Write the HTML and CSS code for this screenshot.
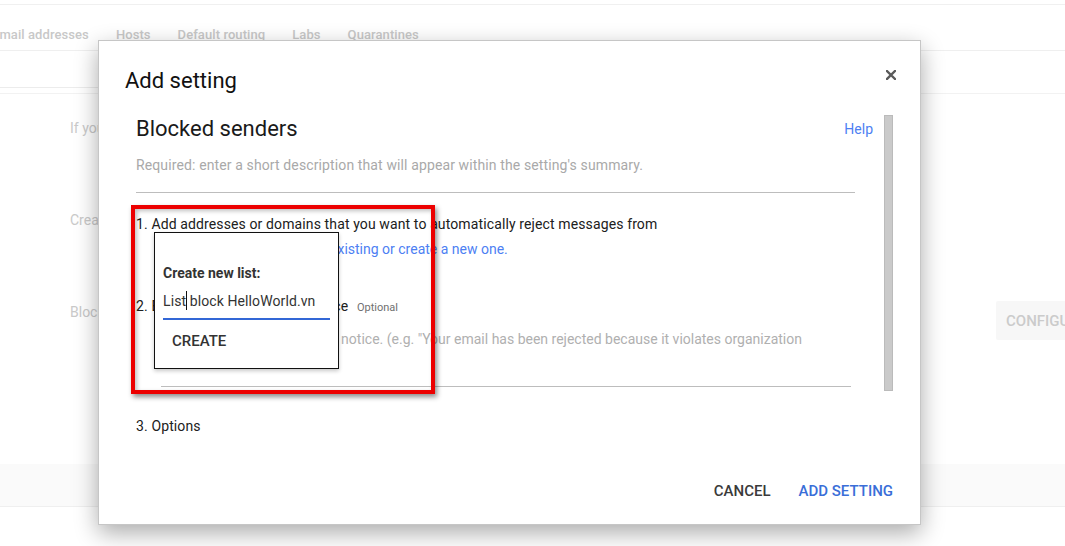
FILE: index.html
```html
<!DOCTYPE html>
<html lang="en">
<head>
<meta charset="utf-8">
<title>Add setting</title>
<link rel="stylesheet" href="styles.css">
</head>
<body>
<div class="page">
  <div class="topline"></div>
  <nav class="tabs">
    <span class="tab tab-first">Email addresses</span>
    <span class="tab">Hosts</span>
    <span class="tab">Default routing</span>
    <span class="tab">Labs</span>
    <span class="tab">Quarantines</span>
  </nav>
  <div class="subbar"></div>
  <div class="subrule-half"></div>
  <div class="subgap"></div>
  <div class="subrule"></div>
  <div class="rows">
    <div class="row"><span class="row-text">If you want to customize your email settings for this organization</span></div>
    <div class="row"><span class="row-text">Create a new setting</span></div>
    <div class="row"><span class="row-text">Blocked senders</span><button class="configure">CONFIGURE</button></div>
  </div>
  <div class="band"></div>
</div>

<div class="modal">
  <div class="modal-head">
    <h1 class="modal-title">Add setting</h1>
    <svg class="close" width="10" height="10" viewBox="0 0 10 10"><path d="M1 1L9 9M9 1L1 9" stroke="#5a5a5a" stroke-width="2.4" stroke-linecap="square"/></svg>
  </div>
  <div class="modal-body">
    <div class="content">
      <div class="setting-head">
        <h2 class="setting-title">Blocked senders</h2>
        <a class="help">Help</a>
      </div>
      <div class="desc-field">Required: enter a short description that will appear within the setting's summary.</div>
      <p class="step step-1">1. Add addresses or domains that you want to automatically reject messages from</p>
      <p class="step-link"><span class="link">Use an existing or create a new one.</span></p>
      <p class="step step-2">2. Enter a custom rejection notice <span class="optional">Optional</span></p>
      <div class="notice-field">Enter your custom rejection notice. (e.g. "Your email has been rejected because it violates organization</div>
      <p class="step step-3">3. Options</p>
    </div>
    <div class="scrollbar"></div>
  </div>
  <div class="modal-foot">
    <button class="btn btn-cancel">CANCEL</button>
    <button class="btn btn-primary">ADD SETTING</button>
  </div>
</div>

<div class="highlight"></div>

<div class="popup">
  <div class="popup-label">Create new list:</div>
  <div class="popup-input">List<span class="caret"></span> block HelloWorld.vn</div>
  <button class="popup-create">CREATE</button>
</div>
</body>
</html>
```

FILE: styles.css
```css
html, body {
  margin: 0;
  padding: 0;
  height: 100%;
  overflow: hidden;
  background: #fff;
  font-family: "Roboto", "Liberation Sans", sans-serif;
}

/* ---------- background page ---------- */
.topline {
  height: 4px;
  border-bottom: 1px solid #f0f0f0;
}
.tabs {
  height: 46px;
  box-sizing: border-box;
  padding-top: 22px;
  display: flex;
  gap: 27px;
  border-bottom: 1px solid #efefef;
  white-space: nowrap;
}
.tab {
  font-size: 13px;
  line-height: 16px;
  font-weight: 500;
  letter-spacing: 0.08px;
  color: #c8c8c8;
}
.tab-first { margin-left: -8px; }
.subbar { height: 36px; }
.subrule-half { height: 1px; width: 50%; background: #ececec; }
.subgap { height: 5px; }
.subrule { height: 1px; background: #f2f2f2; }

.rows {
  padding: 24px 0 0 70px;
}
.row {
  height: 92px;
  display: flex;
  align-items: flex-start;
}
.row-text {
  font-size: 14px;
  line-height: 20px;
  color: #c9c9c9;
  white-space: nowrap;
}
.configure {
  margin-left: auto;
  margin-top: -1px;
  margin-right: -41px;
  width: 110px;
  height: 39px;
  flex-shrink: 0;
  border: 0;
  border-radius: 2px;
  background: #f7f7f7;
  color: #cbcbcb;
  font-family: inherit;
  font-size: 15px;
  font-weight: 500;
  text-align: left;
  padding: 0 0 0 10px;
}
.band {
  margin-top: 70px;
  height: 42px;
  background: #fafafa;
  border-bottom: 1px solid #efefef;
}

/* ---------- modal ---------- */
.modal {
  position: absolute;
  left: 98px;
  top: 40px;
  width: 823px;
  height: 485px;
  box-sizing: border-box;
  background: #fff;
  border: 1px solid #c6c6c6;
  box-shadow: 0 8px 22px rgba(0, 0, 0, 0.33);
  display: flex;
  flex-direction: column;
}
.modal-head {
  display: flex;
  justify-content: space-between;
  align-items: flex-start;
  padding: 26px 24px 0 26px;
}
.modal-title {
  margin: 0;
  font-size: 22px;
  line-height: 28px;
  font-weight: 400;
  color: #111;
}
.close {
  margin-top: 3px;
  display: block;
}
.modal-body {
  display: flex;
  align-items: flex-start;
  padding: 20px 27px 0 37px;
}
.content {
  width: 737px;
  margin-right: 11px;
}
.setting-head {
  display: flex;
  justify-content: space-between;
  align-items: center;
  height: 28px;
}
.setting-title {
  margin: 0;
  font-size: 22px;
  line-height: 28px;
  font-weight: 400;
  color: #1a1a1a;
}
.help {
  font-size: 14px;
  line-height: 20px;
  color: #4d7ff3;
}
.desc-field {
  margin: 12px 18px 0 0;
  padding-bottom: 17px;
  border-bottom: 1px solid #bdbdbd;
  font-size: 14px;
  line-height: 20px;
  letter-spacing: 0.12px;
  color: #a9a9a9;
}
.step {
  margin: 0;
  font-size: 14px;
  line-height: 20px;
  letter-spacing: 0.12px;
  color: #202020;
}
.step-1 { margin-top: 21px; }
.step-2 { margin-top: 37px; }
.step-3 { margin-top: 29px; }
.step-link {
  margin: 5px 0 0 0;
  padding-left: 148px;
  font-size: 14px;
  line-height: 20px;
}
.link { color: #4d7ff3; }
.optional {
  margin-left: 5px;
  font-size: 11px;
  letter-spacing: 0;
  color: #707070;
}
.notice-field {
  margin: 11px 22px 0 25px;
  padding: 0 0 37px 6px;
  border-bottom: 1px solid #bdbdbd;
  font-size: 14px;
  line-height: 20px;
  color: #b0b0b0;
  white-space: nowrap;
  overflow: hidden;
}
.scrollbar {
  width: 9px;
  height: 276px;
  box-sizing: border-box;
  background: #cacaca;
  border: 1px solid #bbbbbb;
  flex-shrink: 0;
}
.modal-foot {
  margin-top: auto;
  display: flex;
  justify-content: flex-end;
  gap: 28px;
  padding: 0 27px 23px 0;
}
.btn {
  border: 0;
  background: none;
  padding: 0;
  font-family: inherit;
  font-size: 15px;
  line-height: 20px;
  font-weight: 500;
}
.btn-cancel { color: #3a3a3a; }
.btn-primary { color: #3a6ed8; }

/* ---------- annotation overlays ---------- */
.highlight {
  position: absolute;
  left: 131px;
  top: 205px;
  width: 304px;
  height: 189px;
  box-sizing: border-box;
  border: 4px solid #ec0000;
  box-shadow: 2px 3px 5px rgba(0, 0, 0, 0.45), inset 2px 2px 4px rgba(0, 0, 0, 0.25);
}
.popup {
  position: absolute;
  left: 154px;
  top: 232px;
  width: 185px;
  height: 137px;
  box-sizing: border-box;
  padding: 30px 8px 0;
  background: #fff;
  border: 1px solid #111;
  box-shadow: 0 2px 4px rgba(0, 0, 0, 0.22);
}
.popup-label {
  font-size: 14px;
  line-height: 20px;
  font-weight: 700;
  color: #333;
}
.popup-input {
  margin-top: 8px;
  padding-bottom: 7px;
  border-bottom: 2px solid #3367d6;
  font-size: 14px;
  line-height: 20px;
  letter-spacing: 0.1px;
  color: #333;
  white-space: nowrap;
}
.caret {
  display: inline-block;
  width: 1px;
  height: 19px;
  margin-right: -1px;
  vertical-align: -4px;
  background: #111;
}
.popup-create {
  margin-top: 11px;
  border: 0;
  background: none;
  padding: 0 0 0 9px;
  font-family: inherit;
  font-size: 15px;
  line-height: 20px;
  font-weight: 500;
  color: #333;
}
```
